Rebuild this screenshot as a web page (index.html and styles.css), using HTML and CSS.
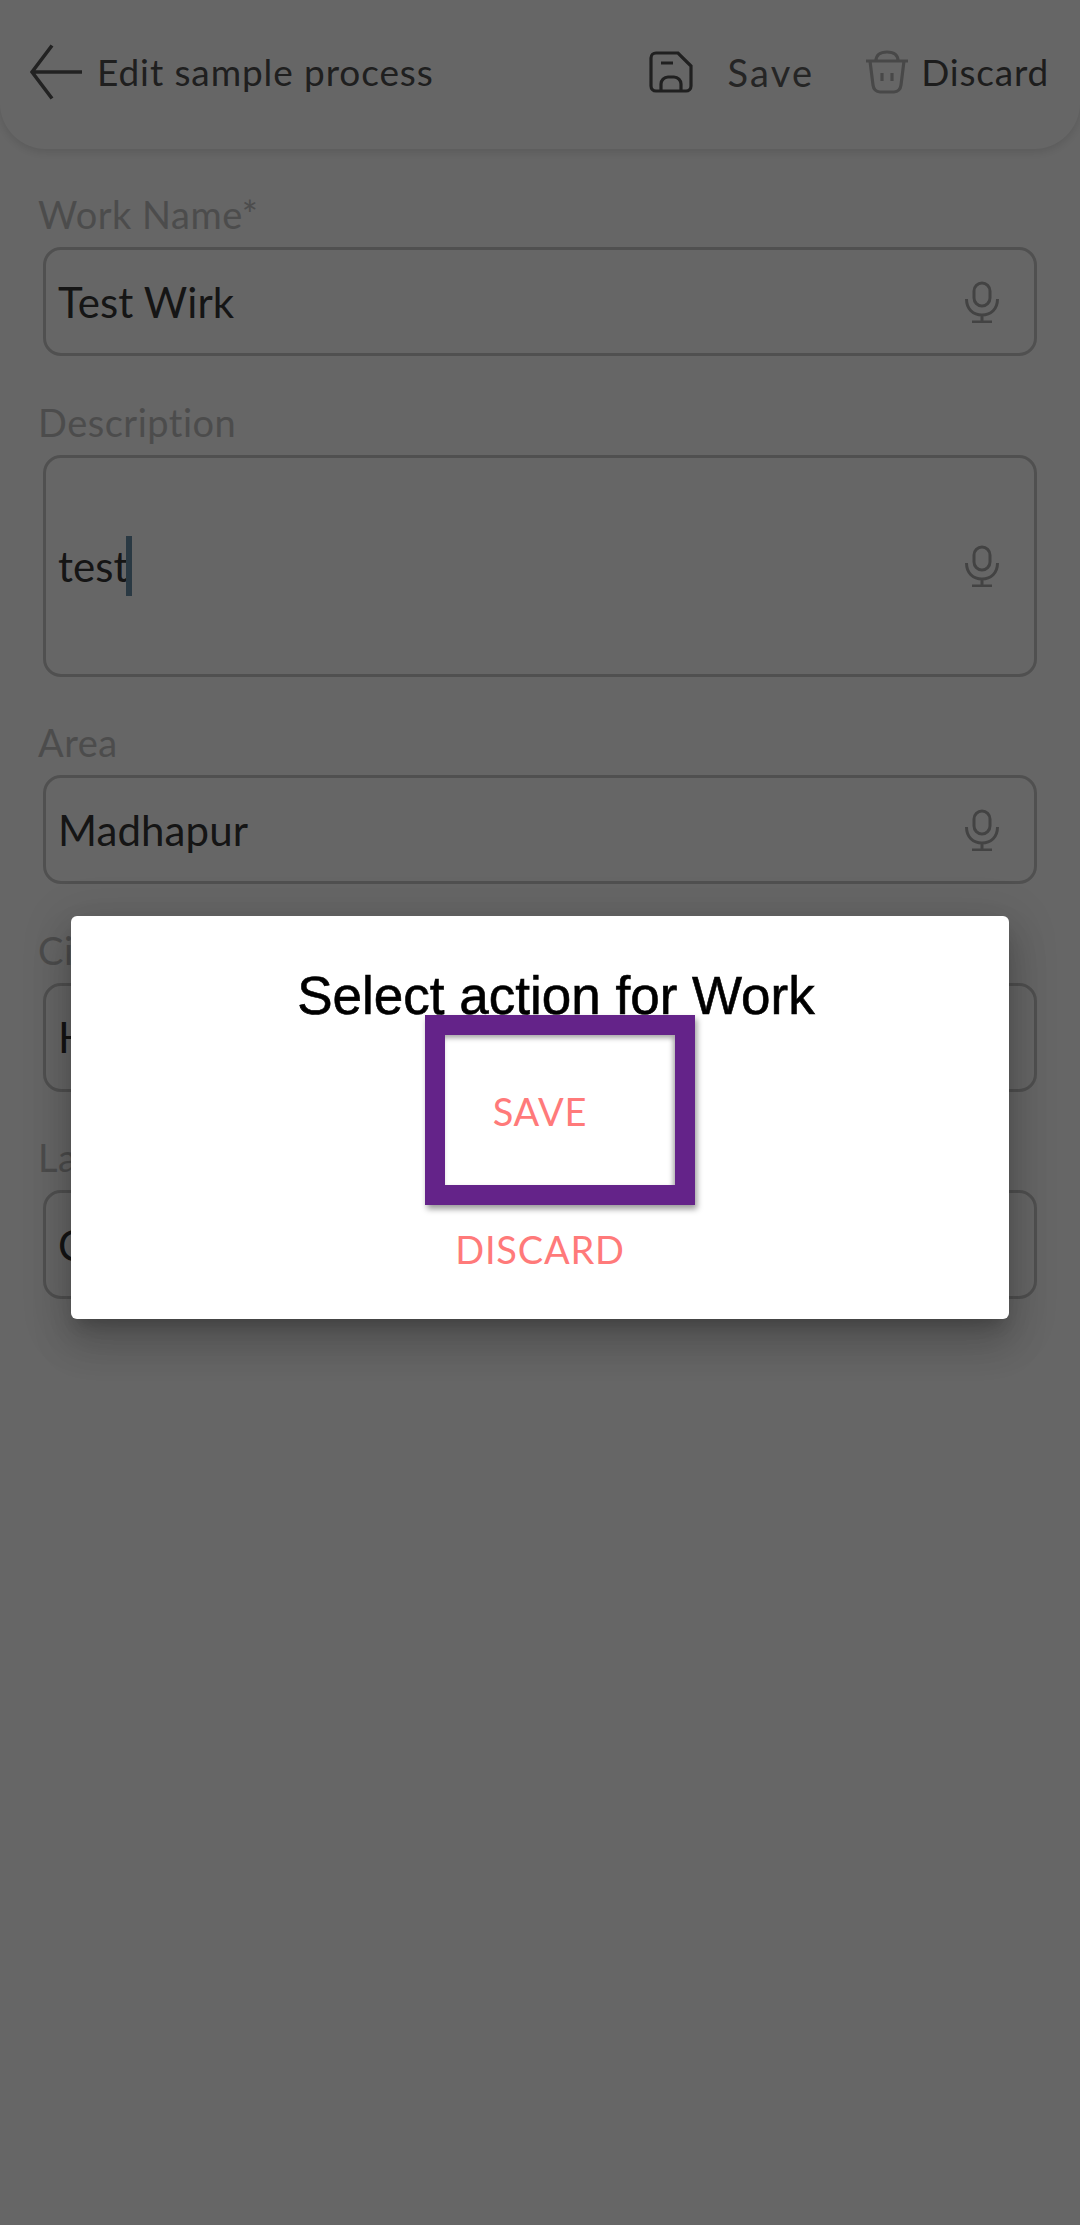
FILE: index.html
```html
<!DOCTYPE html>
<html lang="en">
<head>
<meta charset="utf-8">
<title>Edit sample process</title>
<link rel="stylesheet" href="styles.css">
</head>
<body>
<div class="page">
  <header class="topbar">
    <div class="topbar-left">
      <svg class="icon-back" viewBox="0 0 54 56"><path d="M22 1.500 2 28 22 54.500M2 28H52"/></svg>
      <span class="title">Edit sample process</span>
    </div>
    <div class="action action-save">
      <svg class="icon-save" viewBox="0 0 44 42"><path d="M7 2H29L42 15V35a5 5 0 0 1-5 5H7a5 5 0 0 1-5-5V7a5 5 0 0 1 5-5ZM12 40V33a7 7 0 0 1 7-7H25a7 7 0 0 1 7 7V40M12 12H24"/></svg>
      <span class="action-label save-label">Save</span>
    </div>
    <div class="action action-discard">
      <svg class="icon-trash" viewBox="0 0 44 44"><path d="M1 11H43M11 11C11 5 15 2 22 2S33 5 33 11M5 11 8 35C8.500 39 11 42 15 42H29C33 42 35.500 39 36 35L39 11M17 23V31M27 23V31"/></svg>
      <span class="action-label">Discard</span>
    </div>
  </header>

  <main class="form">
    <section class="field">
      <label class="field-label">Work Name*</label>
      <div class="input">
        <span class="value">Test Wirk</span>
        <svg class="icon-mic" viewBox="0 0 34 42"><path d="M17 2a8 8 0 0 1 8 8V17a8 8 0 0 1-16 0V10a8 8 0 0 1 8-8ZM1.500 18C1.500 28 8 34 17 34S32.500 28 32.500 18M17 34V41M7 41H27"/></svg>
      </div>
    </section>
    <section class="field">
      <label class="field-label">Description</label>
      <div class="input input-tall">
        <span class="value value-caret">test<span class="caret"></span></span>
        <svg class="icon-mic" viewBox="0 0 34 42"><path d="M17 2a8 8 0 0 1 8 8V17a8 8 0 0 1-16 0V10a8 8 0 0 1 8-8ZM1.500 18C1.500 28 8 34 17 34S32.500 28 32.500 18M17 34V41M7 41H27"/></svg>
      </div>
    </section>
    <section class="field">
      <label class="field-label">Area</label>
      <div class="input">
        <span class="value">Madhapur</span>
        <svg class="icon-mic" viewBox="0 0 34 42"><path d="M17 2a8 8 0 0 1 8 8V17a8 8 0 0 1-16 0V10a8 8 0 0 1 8-8ZM1.500 18C1.500 28 8 34 17 34S32.500 28 32.500 18M17 34V41M7 41H27"/></svg>
      </div>
    </section>
    <section class="field">
      <label class="field-label">Ci</label>
      <div class="input"><span class="value">H</span></div>
    </section>
    <section class="field">
      <label class="field-label">La</label>
      <div class="input"><span class="value">C</span></div>
    </section>
  </main>
</div>

<div class="overlay">
  <div class="modal">
    <h2 class="modal-title">Select action for Work</h2>
    <div class="modal-action modal-save">SAVE</div>
    <div class="modal-action modal-discard">DISCARD</div>
    <div class="highlight"></div>
  </div>
</div>
</body>
</html>
```

FILE: styles.css
```css
* { box-sizing: border-box; }

html, body {
  margin: 0;
  padding: 0;
}

body {
  width: 1080px;
  height: 2225px;
  overflow: hidden;
  position: relative;
  background: #fff;
  font-family: "Lato", "Noto Sans", sans-serif;
}

.page {
  height: 2225px;
  background: #fff;
}

.topbar {
  height: 149px;
  display: flex;
  align-items: center;
  padding: 0 31px 6px 30px;
  background: #fff;
  border-radius: 0 0 46px 46px;
  box-shadow: 0 3px 10px rgba(0, 0, 0, 0.12);
  color: #4a4a4a;
}

.topbar-left {
  display: flex;
  align-items: center;
  flex: 1;
}

.icon-back {
  width: 54px;
  height: 56px;
  margin-right: 13px;
  fill: none;
  stroke: #555;
  stroke-width: 3.600;
}

.title {
  font-size: 37px;
  letter-spacing: 0.900px;
  color: #4e4e4e;
}

.action {
  display: flex;
  align-items: center;
}

.icon-save {
  width: 44px;
  height: 42px;
  margin-right: 34px;
  fill: none;
  stroke: #505050;
  stroke-width: 3.200;
}

.action-save {
  margin-right: 51px;
}

.action-label {
  font-size: 37px;
  letter-spacing: 0.800px;
}

.save-label {
  color: #5c5c5c;
  font-size: 38px;
  letter-spacing: 2.200px;
}

.icon-trash {
  width: 44px;
  height: 44px;
  margin-right: 12px;
  fill: none;
  stroke: #b4b4b4;
  stroke-width: 3.200;
}

.form {
  padding: 42px 43px 0 38px;
  display: flex;
  flex-direction: column;
  gap: 42.600px;
}

.field-label {
  display: block;
  height: 48px;
  margin-bottom: 8px;
  font-size: 38px;
  line-height: 47px;
  letter-spacing: 0.500px;
  color: #bebebe;
}

.input {
  height: 109px;
  margin-left: 5px;
  padding: 0 35px 0 12px;
  display: flex;
  align-items: center;
  justify-content: space-between;
  border: 3px solid #c8c8c8;
  border-radius: 18px;
}

.input-tall {
  height: 222px;
}

.value {
  font-size: 42px;
  letter-spacing: 0.100px;
  color: #363636;
}

.value-caret {
  display: flex;
  align-items: center;
}

.caret {
  width: 6px;
  height: 60px;
  margin-left: -3px;
  background: #6a8fa8;
}

.icon-mic {
  width: 34px;
  height: 42px;
  fill: none;
  stroke: #a8a8a8;
  stroke-width: 3;
}

/* dimmed scrim that lies over the whole page, holding the dialog */
.overlay {
  position: absolute;
  inset: 0;
  padding: 916px 71px 0;
  background: rgba(0, 0, 0, 0.6);
}

.modal {
  position: relative;
  height: 403px;
  display: flex;
  flex-direction: column;
  align-items: center;
  background: #fff;
  border-radius: 6px;
  box-shadow: 0 11px 15px -7px rgba(0, 0, 0, 0.2),
              0 24px 38px 3px rgba(0, 0, 0, 0.14),
              0 9px 46px 8px rgba(0, 0, 0, 0.12);
}

.modal-title {
  margin: 45px 0 0;
  padding-left: 32px;
  font-family: "Liberation Sans", Arial, sans-serif;
  font-size: 53px;
  line-height: 70px;
  font-weight: 400;
  color: #000;
  -webkit-text-stroke: 0.600px #000;
}

.modal-action {
  font-size: 38px;
  line-height: 48px;
  color: #ff7a7a;
  letter-spacing: 0.800px;
}

.modal-save {
  margin-top: 56px;
}

.modal-discard {
  margin-top: 90px;
}

/* tutorial highlight drawn over the SAVE action */
.highlight {
  position: absolute;
  left: 354px;
  top: 99px;
  width: 270px;
  height: 190px;
  border: 20px solid #642389;
  box-shadow: 2px 4px 6px rgba(0, 0, 0, 0.4),
              inset -2px 3px 5px rgba(0, 0, 0, 0.35);
}
```
